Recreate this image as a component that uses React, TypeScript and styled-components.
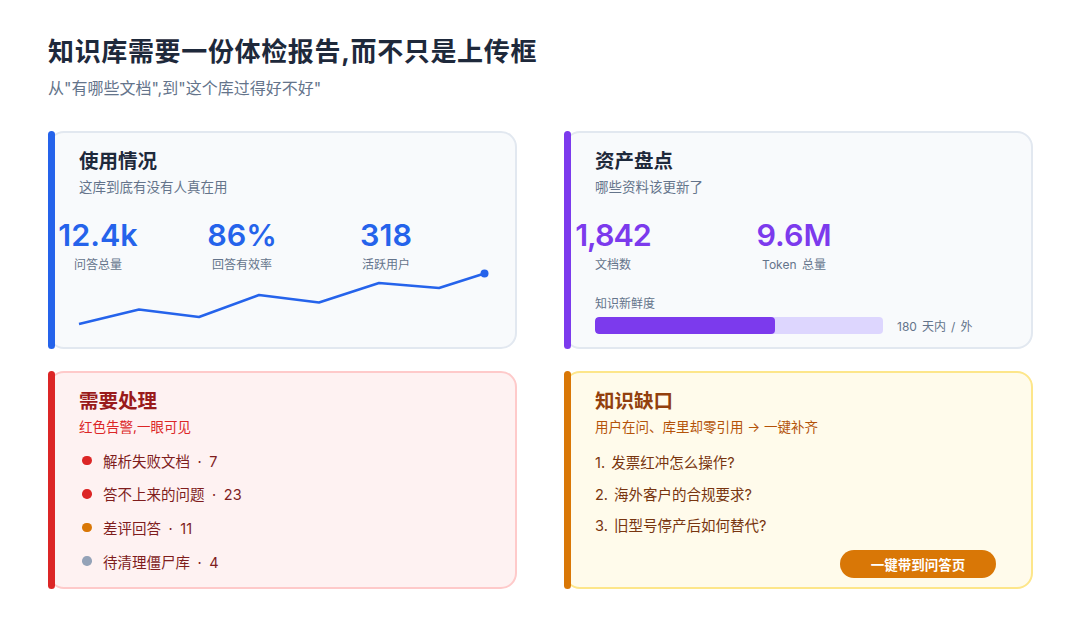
import React from "react";
import styled, { createGlobalStyle } from "styled-components";

const tones = {
  blue: { bg: "#f8fafc", border: "#e2e8f0", strip: "#2563eb", title: "#1e293b", sub: "#64748b" },
  purple: { bg: "#f8fafc", border: "#e2e8f0", strip: "#7c3aed", title: "#1e293b", sub: "#64748b" },
  red: { bg: "#fef2f2", border: "#fecaca", strip: "#dc2626", title: "#991b1b", sub: "#dc2626" },
  amber: { bg: "#fffbeb", border: "#fde68a", strip: "#d97706", title: "#92400e", sub: "#b45309" },
};

type Tone = keyof typeof tones;

const GlobalStyle = createGlobalStyle`
  html, body {
    margin: 0;
    padding: 0;
    background: #ffffff;
  }
  body {
    font-family: Inter, "Noto Sans CJK SC", sans-serif;
  }
`;

const Page = styled.div`
  width: 1080px;
  height: 624px;
  box-sizing: border-box;
  padding: 34px 47px 0 48px;
  overflow: hidden;
`;

const Title = styled.h1`
  margin: 0;
  font-size: 26px;
  line-height: 36px;
  font-weight: 700;
  letter-spacing: 0.65px;
  color: #1e293b;
`;

const Subtitle = styled.p`
  margin: 7px 0 0;
  font-size: 16px;
  line-height: 22px;
  color: #64748b;
`;

const Grid = styled.div`
  display: grid;
  grid-template-columns: 469px 469px;
  grid-auto-rows: 218px;
  column-gap: 47px;
  row-gap: 22px;
  margin-top: 32px;
`;

const Card = styled.section<{ $tone: Tone }>`
  position: relative;
  display: flex;
  flex-direction: column;
  box-sizing: border-box;
  padding: 15px 35px 9px 29px;
  background: ${(p) => tones[p.$tone].bg};
  border: 2px solid ${(p) => tones[p.$tone].border};
  border-radius: 16px;

  &::before {
    content: "";
    position: absolute;
    left: -2px;
    top: -2px;
    bottom: -2px;
    width: 7px;
    border-radius: 4px;
    background: ${(p) => tones[p.$tone].strip};
  }
`;

const CardTitle = styled.h2<{ $tone: Tone }>`
  margin: 0;
  font-size: 19.5px;
  line-height: 26px;
  font-weight: 700;
  color: ${(p) => tones[p.$tone].title};
`;

const CardSub = styled.p<{ $tone: Tone }>`
  margin: 3px 0 0;
  font-size: 13.5px;
  line-height: 20px;
  color: ${(p) => tones[p.$tone].sub};
`;

const Stats = styled.div<{ $gap: number }>`
  display: flex;
  gap: ${(p) => p.$gap}px;
  margin-top: 18px;
`;

const Stat = styled.div<{ $width: number }>`
  display: flex;
  flex-direction: column;
  align-items: center;
  width: ${(p) => p.$width}px;
  white-space: nowrap;
`;

const StatValue = styled.div<{ $color: string; $spacing?: number }>`
  font-size: 30.5px;
  line-height: 40px;
  font-weight: 600;
  letter-spacing: ${(p) => p.$spacing ?? 0}px;
  color: ${(p) => p.$color};
`;

const StatLabel = styled.div`
  margin-top: 1px;
  font-size: 12px;
  line-height: 18px;
  word-spacing: 2px;
  color: #64748b;
`;

const Spark = styled.svg`
  display: block;
  margin-top: 8px;
  overflow: visible;
`;

const FreshLabel = styled.div`
  margin-top: 21px;
  font-size: 12px;
  line-height: 18px;
  color: #64748b;
`;

const BarRow = styled.div`
  display: flex;
  align-items: center;
  gap: 14px;
  margin-top: 4px;
`;

const BarTrack = styled.div`
  width: 288px;
  height: 17px;
  border-radius: 4px;
  background: #ddd6fe;
  overflow: hidden;
`;

const BarFill = styled.div`
  height: 100%;
  border-radius: 4px;
  background: #7c3aed;
`;

const BarNote = styled.span`
  font-size: 12px;
  word-spacing: 1.7px;
  color: #64748b;
`;

const AlertList = styled.ul`
  list-style: none;
  margin: 6.5px 0 0;
  padding: 0 0 0 3px;
  display: flex;
  flex-direction: column;
`;

const AlertRow = styled.li`
  display: flex;
  align-items: center;
  gap: 11.5px;
  height: 33.6px;
  font-size: 14.5px;
  word-spacing: 3.5px;
  color: #7f1d1d;
`;

const Dot = styled.span<{ $color: string }>`
  flex: none;
  width: 9.5px;
  height: 9.5px;
  border-radius: 50%;
  background: ${(p) => p.$color};
`;

const GapList = styled.ol`
  list-style: none;
  margin: 10px 0 0;
  padding: 0;
  display: flex;
  flex-direction: column;
`;

const GapRow = styled.li`
  height: 31.5px;
  line-height: 31.5px;
  font-size: 14.5px;
  word-spacing: 2px;
  color: #78350f;
`;

const ActionButton = styled.button`
  align-self: flex-end;
  margin-top: auto;
  width: 156px;
  height: 28px;
  padding: 0;
  border: none;
  border-radius: 14px;
  background: #d97706;
  color: #ffffff;
  font-family: inherit;
  font-size: 13.5px;
  font-weight: 600;
`;

const sparkPoints = [
  [0, 42],
  [60, 27.5],
  [120, 35],
  [180, 13],
  [240, 20.5],
  [300, 1],
  [360, 6],
  [405.5, -8.5],
];

const alerts = [
  { color: "#dc2626", text: "解析失败文档 · 7" },
  { color: "#dc2626", text: "答不上来的问题 · 23" },
  { color: "#d97706", text: "差评回答 · 11" },
  { color: "#94a3b8", text: "待清理僵尸库 · 4" },
];

const gaps = ["1. 发票红冲怎么操作?", "2. 海外客户的合规要求?", "3. 旧型号停产后如何替代?"];

export default function App() {
  return (
    <Page>
      <GlobalStyle />
      <Title>知识库需要一份体检报告,而不只是上传框</Title>
      <Subtitle>从"有哪些文档",到"这个库过得好不好"</Subtitle>
      <Grid>
        <Card $tone="blue">
          <CardTitle $tone="blue">使用情况</CardTitle>
          <CardSub $tone="blue">这库到底有没有人真在用</CardSub>
          <Stats $gap={106}>
            <Stat $width={38}>
              <StatValue $color="#2563eb">12.4k</StatValue>
              <StatLabel>问答总量</StatLabel>
            </Stat>
            <Stat $width={38}>
              <StatValue $color="#2563eb">86%</StatValue>
              <StatLabel>回答有效率</StatLabel>
            </Stat>
            <Stat $width={38}>
              <StatValue $color="#2563eb">318</StatValue>
              <StatLabel>活跃用户</StatLabel>
            </Stat>
          </Stats>
          <Spark width="406" height="44" viewBox="0 0 406 44">
            <polyline
              points={sparkPoints.map((pt) => pt.join(",")).join(" ")}
              fill="none"
              stroke="#2563eb"
              strokeWidth="2.5"
              strokeLinejoin="round"
            />
            <circle cx="405.5" cy="-8.5" r="4" fill="#2563eb" />
          </Spark>
        </Card>

        <Card $tone="purple">
          <CardTitle $tone="purple">资产盘点</CardTitle>
          <CardSub $tone="purple">哪些资料该更新了</CardSub>
          <Stats $gap={145}>
            <Stat $width={36}>
              <StatValue $color="#7c3aed" $spacing={-1}>1,842</StatValue>
              <StatLabel>文档数</StatLabel>
            </Stat>
            <Stat $width={36}>
              <StatValue $color="#7c3aed">9.6M</StatValue>
              <StatLabel>Token 总量</StatLabel>
            </Stat>
          </Stats>
          <FreshLabel>知识新鲜度</FreshLabel>
          <BarRow>
            <BarTrack>
              <BarFill style={{ width: `${(180 / 288) * 100}%` }} />
            </BarTrack>
            <BarNote>180 天内 / 外</BarNote>
          </BarRow>
        </Card>

        <Card $tone="red">
          <CardTitle $tone="red">需要处理</CardTitle>
          <CardSub $tone="red">红色告警,一眼可见</CardSub>
          <AlertList>
            {alerts.map((a) => (
              <AlertRow key={a.text}>
                <Dot $color={a.color} />
                <span>{a.text}</span>
              </AlertRow>
            ))}
          </AlertList>
        </Card>

        <Card $tone="amber">
          <CardTitle $tone="amber">知识缺口</CardTitle>
          <CardSub $tone="amber">用户在问、库里却零引用 → 一键补齐</CardSub>
          <GapList>
            {gaps.map((g) => (
              <GapRow key={g}>{g}</GapRow>
            ))}
          </GapList>
          <ActionButton>一键带到问答页</ActionButton>
        </Card>
      </Grid>
    </Page>
  );
}
